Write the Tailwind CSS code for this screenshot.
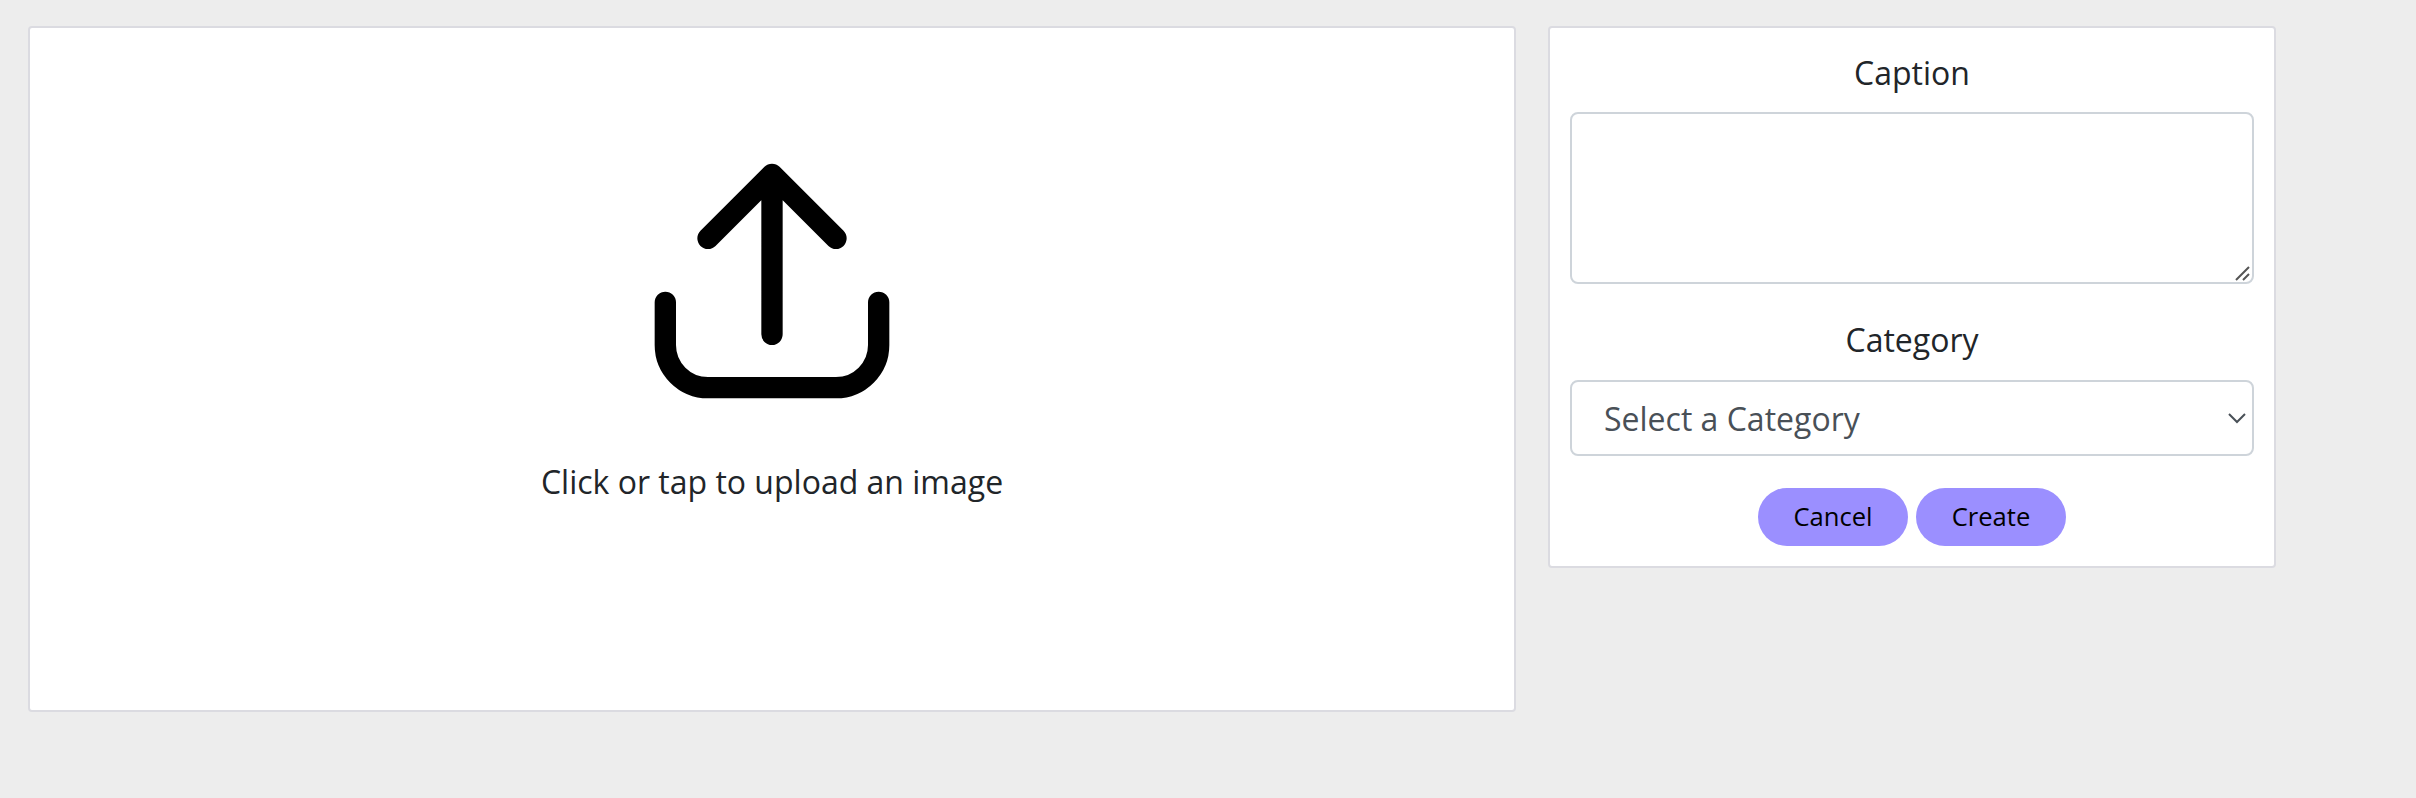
<!DOCTYPE html>
<html lang="en">
<head>
<meta charset="utf-8">
<title>Create post</title>
<script src="https://cdn.jsdelivr.net/npm/@tailwindcss/browser@4"></script>
</head>
<body class="flex min-h-screen items-start gap-8 bg-[#ededed] pt-[26px] pl-7 font-['Open_Sans','Noto_Sans',sans-serif] text-[32px] leading-[48px] text-[#212529]">
  <main class="flex h-[686px] w-[1488px] flex-col items-center rounded-[4px] border-2 border-[#dbdbe1] bg-white pt-[125px]">
    <svg class="size-64" viewBox="0 0 24 24" fill="none" stroke="#000" stroke-width="2" stroke-linecap="round" stroke-linejoin="round">
      <path d="M12 17V2M6 8l6-6 6 6M2 14v4a4 4 0 0 0 4 4h12a4 4 0 0 0 4-4v-4"/>
    </svg>
    <p class="mt-[49px]">Click or tap to upload an image</p>
  </main>
  <form class="flex h-[542px] w-[728px] flex-col items-center rounded-[4px] border-2 border-[#dbdbe1] bg-white px-5 pt-5">
    <label class="pt-px -mb-px">Caption</label>
    <div class="relative mt-4 h-[172px] w-full rounded-lg border-2 border-[#ced4da]">
      <svg class="absolute right-[2px] bottom-[1px] h-[15px] w-[15px]" viewBox="0 0 15 15" fill="none" stroke="#555" stroke-width="2">
        <path d="M1 14L14 1M8 14l6-6"/>
      </svg>
    </div>
    <label class="mt-8">Category</label>
    <div class="mt-4 flex h-[76px] w-full items-center justify-between rounded-lg border-2 border-[#ced4da] pr-[6px] pl-8 text-[#495057]">
      <span class="pt-px">Select a Category</span>
      <svg class="h-3 w-[18px]" viewBox="0 0 18 12" fill="none" stroke="#495057" stroke-width="2"><path d="M1 2l8 8 8-8"/></svg>
    </div>
    <div class="mt-8 flex gap-2 text-[25.6px] leading-[58px] text-black">
      <button type="button" class="h-[58px] w-[150px] rounded-full bg-[#9b8fff]">Cancel</button>
      <button type="button" class="h-[58px] w-[150px] rounded-full bg-[#9b8fff]">Create</button>
    </div>
  </form>
</body>
</html>
